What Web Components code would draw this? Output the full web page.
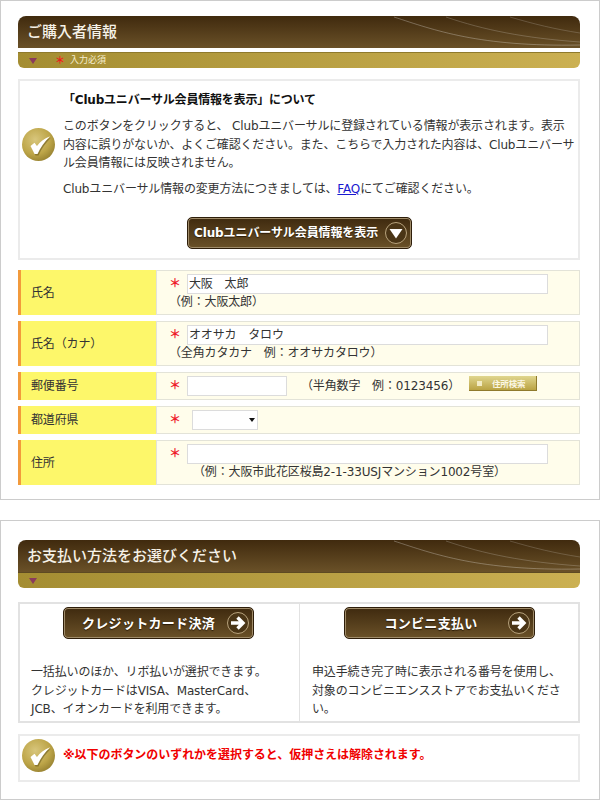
<!DOCTYPE html>
<html lang="ja">
<head>
<meta charset="utf-8">
<title>ご購入者情報</title>
<style>
  html, body { margin: 0; background: #fff; }
  body { font: 12px/18.5px "DejaVu Sans", "Noto Sans CJK JP", sans-serif; letter-spacing: -.15px; color: #333; }
  a { color: #1a1ad0; }
</style>
</head>
<body>
<page-panel style="--pad:15px 19px 14px 17px; height:500px">
  <section-head>
    ご購入者情報
    <span slot="bar">入力必須</span>
  </section-head>
  <info-box style="margin-top:11px">
    <b style="color:#111; letter-spacing:-.2px">「Clubユニバーサル会員情報を表示」について</b>
    <p style="margin:7.5px 0 0">このボタンをクリックすると、 Clubユニバーサルに登録されている情報が表示されます。表示<br>内容に誤りがないか、よくご確認ください。また、こちらで入力された内容は、Clubユニバーサ<br>ル会員情報には反映されません。</p>
    <p style="margin:7px 0 0">Clubユニバーサル情報の変更方法につきましては、<a href="#">FAQ</a>にてご確認ください。</p>
    <gold-button slot="action" icon="down" style="width:225px; --size:12px">Clubユニバーサル会員情報を表示</gold-button>
  </info-box>
  <form-rows style="margin-top:10px">
    <form-row label="氏名" tall>
      <text-box value="大阪　太郎" style="width:361px"></text-box>
      <span slot="hint">（例：大阪太郎）</span>
    </form-row>
    <form-row label="氏名（カナ）" tall>
      <text-box value="オオサカ　タロウ" style="width:361px"></text-box>
      <span slot="hint">（全角カタカナ　例：オオサカタロウ）</span>
    </form-row>
    <form-row label="郵便番号">
      <text-box style="width:100px"></text-box>
      <span style="margin-left:14px">（半角数字　例：0123456）</span>
      <search-chip style="margin-left:auto">住所検索</search-chip>
    </form-row>
    <form-row label="都道府県">
      <pref-select></pref-select>
    </form-row>
    <form-row label="住所" tall>
      <text-box style="width:361px"></text-box>
      <span slot="hint" style="padding-left:24px">（例：大阪市此花区桜島2-1-33USJマンション1002号室）</span>
    </form-row>
  </form-rows>
</page-panel>

<page-panel style="--pad:19px 19px 16px 17px; height:280px; margin-top:20px">
  <section-head joined>お支払い方法をお選びください</section-head>
  <pay-table style="margin-top:14px">
    <pay-option>
      <gold-button slot="action" icon="right" style="--label-pad:7px; --track:.3px">クレジットカード決済</gold-button>
      一括払いのほか、リボ払いが選択できます。<br>クレジットカードはVISA、MasterCard、<br>JCB、イオンカードを利用できます。
    </pay-option>
    <pay-option>
      <gold-button slot="action" icon="right" style="--label-pad:10px; --track:.3px">コンビニ支払い</gold-button>
      申込手続き完了時に表示される番号を使用し、対象のコンビニエンスストアでお支払いください。
    </pay-option>
  </pay-table>
  <info-box compact style="margin-top:11px">
    <b style="color:#f00000; letter-spacing:-.05px">※以下のボタンのいずれかを選択すると、仮押さえは解除されます。</b>
  </info-box>
</page-panel>

<script>
class PagePanel extends HTMLElement {
  constructor() {
    super();
    this.attachShadow({mode: 'open'}).innerHTML = `
      <style>
        :host { display: block; box-sizing: border-box; width: 600px; border: 1px solid #ccc; padding: var(--pad); background: #fff; }
      </style>
      <slot></slot>`;
  }
}

class SectionHead extends HTMLElement {
  constructor() {
    super();
    this.attachShadow({mode: 'open'}).innerHTML = `
      <style>
        :host { display: block; letter-spacing: 0; }
        .title {
          position: relative; overflow: hidden; box-sizing: border-box; height: 32px; padding: 0 9px;
          border-radius: 8px 8px 0 0; background: linear-gradient(#402a0e, #6a5128);
          color: #f6f2e8; font-size: 15px; font-weight: 500; line-height: 32px;
        }
        .title svg { position: absolute; top: 0; right: 0; }
        .bar {
          display: flex; align-items: center; height: 16px; margin-top: 4px; padding-left: 11px;
          border-top: 1px solid #8f7a2c; box-sizing: border-box;
          border-radius: 0 0 6px 6px; background: linear-gradient(90deg, #a48d32, #cbb052);
          color: #f4edd0; font-size: 9px; line-height: 15px;
        }
        :host([joined]) .bar { margin-top: 0; border-top-color: #5d4a22; }
        .tri { width: 0; height: 0; border: 4px solid transparent; border-top: 6px solid #8a3b5c; border-bottom: 0; }
        .star { margin: 0 5px 0 18px; color: #ee1c1c; font-size: 10px; font-weight: bold; }
        :host([joined]) .star { display: none; }
      </style>
      <div class="title">
        <slot></slot>
        <svg width="186" height="32" viewBox="0 0 186 32" fill="none" stroke="#fff">
          <path d="M0 1C40 14 85 31 186 29" stroke-opacity=".28"/>
          <path d="M52 1C90 14 130 22 186 26" stroke-opacity=".2"/>
          <path d="M116 1C140 8 160 13 186 17" stroke-opacity=".18"/>
        </svg>
      </div>
      <div class="bar"><span class="tri"></span><span class="star">＊</span><slot name="bar"></slot></div>`;
  }
}

class CheckMark extends HTMLElement {
  constructor() {
    super();
    this.attachShadow({mode: 'open'}).innerHTML = `
      <style>:host { display: block; width: 33px; height: 33px; flex: none; } svg { display: block; }</style>
      <svg width="33" height="33" viewBox="0 0 33 33">
        <defs>
          <radialGradient id="g" cx=".4" cy=".35" r=".75">
            <stop offset="0" stop-color="#d8c67c"/><stop offset=".6" stop-color="#bda548"/><stop offset="1" stop-color="#8f7a2c"/>
          </radialGradient>
        </defs>
        <circle cx="16.5" cy="16.5" r="16.5" fill="url(#g)"/>
        <path d="M9.500 19.500L13.500 16.500L16 19.500C19 15 23 12 29 9.500C23.500 15 19.500 20.500 16.500 27.500L13.500 27.500Z" fill="#6d5c1e" opacity=".6"/>
        <path d="M8.500 18L12.500 14.800L15 18C18 13.800 22 10.800 28 8.300C22.500 13.800 18.500 19.500 15.500 26L12.500 26Z" fill="#fff"/>
      </svg>`;
  }
}

class InfoBox extends HTMLElement {
  constructor() {
    super();
    this.attachShadow({mode: 'open'}).innerHTML = `
      <style>
        :host { display: block; box-sizing: border-box; height: 181px; border: 2px solid #ebebeb; padding: 10px 2px 0; background: #fff; }
        :host([compact]) { height: 48px; padding: 3px 2px 0; }
        .top { display: flex; align-items: center; gap: 8px; }
        .text { flex: 1; white-space: nowrap; }
        :host([compact]) .text { line-height: 33px; }
        .action { display: flex; justify-content: center; margin: 19px 0 0 1px; }
        :host([compact]) .action { display: none; }
      </style>
      <div class="top"><check-mark></check-mark><div class="text"><slot></slot></div></div>
      <div class="action"><slot name="action"></slot></div>`;
  }
}

class GoldButton extends HTMLElement {
  constructor() {
    super();
    const glyph = this.getAttribute('icon') === 'down'
      ? '<path d="M5.500 8H18.500L12 17.500Z" fill="#fff"/>'
      : '<path d="M5 12H15M11.500 6.500L17 12L11.500 17.500" fill="none" stroke="#fff" stroke-width="3.400"/>';
    this.attachShadow({mode: 'open'}).innerHTML = `
      <style>
        :host { display: block; box-sizing: border-box; width: 191px; height: 32px; }
        button {
          display: flex; align-items: center; box-sizing: border-box; width: 100%; height: 100%; padding: 0 3px 0 0;
          border: 1px solid #2e1e0a; border-radius: 5px; background: linear-gradient(#3f2a0f, #6a5128);
          box-shadow: inset 0 0 0 1px #a08c6a; color: #fff; font: bold var(--size, 13px)/1 "DejaVu Sans", "Noto Sans CJK JP", sans-serif;
          letter-spacing: var(--track, -.1px); text-shadow: 0 1px 1px #2a1a06; cursor: pointer;
        }
        span { flex: 1; text-align: center; padding-left: var(--label-pad, 0); white-space: nowrap; }
        svg { flex: none; display: block; }
      </style>
      <button type="button"><span><slot></slot></span>
        <svg width="24" height="24" viewBox="0 0 24 24"><circle cx="12" cy="12" r="10.500" fill="#4a3516" stroke="#b7a27c"/>${glyph}</svg>
      </button>`;
  }
}

class FormRows extends HTMLElement {
  constructor() {
    super();
    this.attachShadow({mode: 'open'}).innerHTML = `
      <style>:host { display: flex; flex-direction: column; gap: 6px; }</style>
      <slot></slot>`;
  }
}

class FormRow extends HTMLElement {
  constructor() {
    super();
    this.attachShadow({mode: 'open'}).innerHTML = `
      <style>
        :host { display: grid; grid-template-columns: 138px 1fr; grid-template-rows: 1fr; box-sizing: border-box; height: 28px; border: 1px solid #e3e3d8; background: #fffdeb; }
        :host([tall]) { height: 45px; }
        .label { display: flex; align-items: center; box-sizing: border-box; margin: -1px 0 -1px -1px; padding: 1px 0 0 10px; border-left: 3px solid #f29a3c; background: #fdf76a; color: #333; border-right: 1px solid #e3e3d8; }
        .cell { padding: 3px 42px 0 12px; min-width: 0; }
        .field { display: flex; align-items: flex-start; line-height: 20px; }
        .star { width: 18px; flex: none; color: #ee1c2c; font-size: 12px; font-weight: bold; line-height: 20px; }
        .hint { height: 18.500px; margin-top: -1px; white-space: nowrap; }
        :host(:not([tall])) .hint { display: none; }
      </style>
      <div class="label"></div>
      <div class="cell">
        <div class="field"><span class="star">＊</span><slot></slot></div>
        <div class="hint"><slot name="hint"></slot></div>
      </div>`;
    this.shadowRoot.querySelector('.label').textContent = this.getAttribute('label');
  }
}

class TextBox extends HTMLElement {
  constructor() {
    super();
    this.attachShadow({mode: 'open'}).innerHTML = `
      <style>
        :host { display: block; flex: none; }
        div { box-sizing: border-box; height: 20px; padding: 0 1px; border: 1px solid #dcdcdc; background: #fff; line-height: 19px; white-space: nowrap; outline: none; }
      </style>
      <div contenteditable="true" role="textbox"></div>`;
    this.shadowRoot.querySelector('div').textContent = this.getAttribute('value') || '';
  }
}

class PrefSelect extends HTMLElement {
  constructor() {
    super();
    this.attachShadow({mode: 'open'}).innerHTML = `
      <style>
        :host { display: block; margin-left: 5px; }
        .box { position: relative; box-sizing: border-box; width: 66px; height: 20px; border: 1px solid #dcdcdc; background: #fff; }
        .box::after { content: ""; position: absolute; right: 2px; top: 7px; border: 3.500px solid transparent; border-top: 4px solid #111; border-bottom: 0; }
      </style>
      <div class="box" role="combobox" aria-label="都道府県"></div>`;
  }
}

class SearchChip extends HTMLElement {
  constructor() {
    super();
    this.attachShadow({mode: 'open'}).innerHTML = `
      <style>
        :host { display: flex; align-items: center; box-sizing: border-box; width: 68px; height: 15px; padding-left: 8px; background: linear-gradient(#e0d68e, #b79f3e); box-shadow: inset -1px -1px 0 #8f7a2c; color: #fbf7e4; font: bold 8.500px/15px "Noto Sans CJK JP", sans-serif; flex: none; }
        i { width: 5px; height: 5px; margin-right: 10px; background: #f3ecc4; }
      </style>
      <i></i><slot></slot>`;
  }
}

class PayTable extends HTMLElement {
  constructor() {
    super();
    this.attachShadow({mode: 'open'}).innerHTML = `
      <style>:host { display: grid; grid-template-columns: 279px 1fr; box-sizing: border-box; height: 121px; border: 2px solid #e2e2e2; background: #fff; }</style>
      <slot></slot>`;
  }
}

class PayOption extends HTMLElement {
  constructor() {
    super();
    this.attachShadow({mode: 'open'}).innerHTML = `
      <style>
        :host { display: block; padding: 3px 13px 0 11px; }
        :host(:last-child) { border-left: 1px solid #e2e2e2; padding: 3px 11px 0 12px; }
        .action { display: flex; justify-content: center; margin-bottom: 24px; }
      </style>
      <div class="action"><slot name="action"></slot></div>
      <slot></slot>`;
  }
}

customElements.define('page-panel', PagePanel);
customElements.define('section-head', SectionHead);
customElements.define('check-mark', CheckMark);
customElements.define('info-box', InfoBox);
customElements.define('gold-button', GoldButton);
customElements.define('form-rows', FormRows);
customElements.define('form-row', FormRow);
customElements.define('text-box', TextBox);
customElements.define('pref-select', PrefSelect);
customElements.define('search-chip', SearchChip);
customElements.define('pay-table', PayTable);
customElements.define('pay-option', PayOption);
</script>
</body>
</html>
